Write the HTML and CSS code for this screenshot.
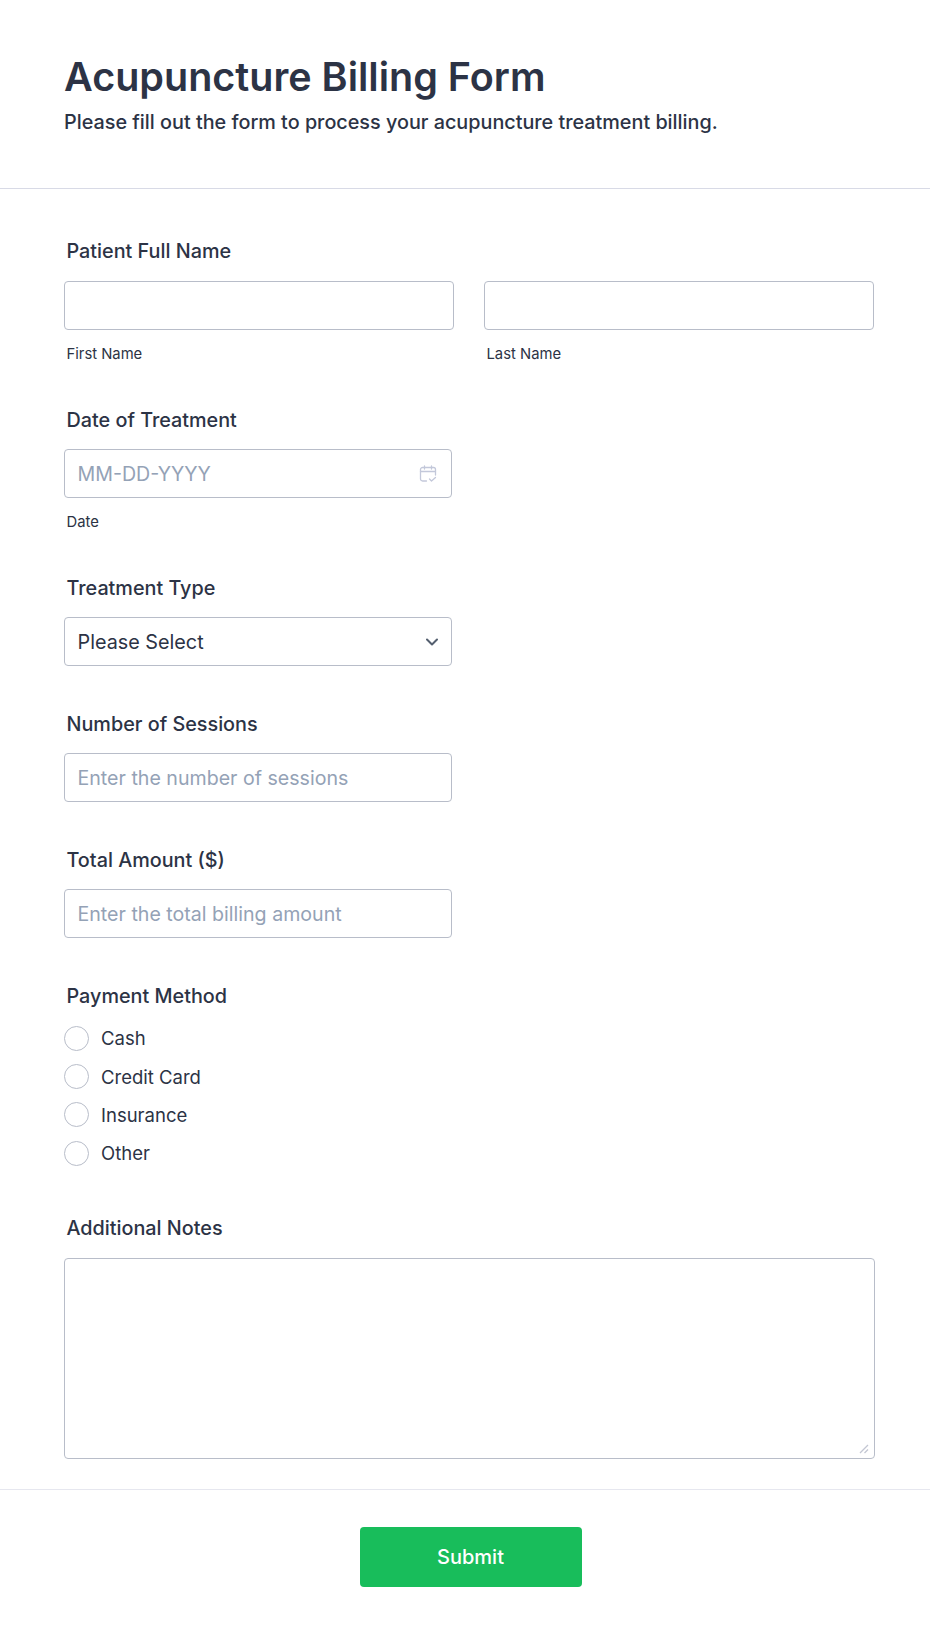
FILE: index.html
```html
<!DOCTYPE html>
<html>
<head>
<meta charset="utf-8">
<title>Acupuncture Billing Form</title>
<link rel="stylesheet" href="styles.css">
</head>
<body>
<form class="form">
	<!--header-->
	<div class="form-head">
		<h1>Acupuncture Billing Form</h1>
		<p>Please fill out the form to process your acupuncture treatment billing.</p>
	</div>
	<!--fields-->
	<div class="form-body">
		<div class="field field-name">
			<label class="label">Patient Full Name</label>
			<div class="name-row">
				<div>
					<input class="input" type="text">
					<span class="sublabel">First Name</span>
				</div>
				<div>
					<input class="input" type="text">
					<span class="sublabel">Last Name</span>
				</div>
			</div>
		</div>
		<div class="field field-date">
			<label class="label">Date of Treatment</label>
			<div class="short date-box">
				<input class="input" type="text" placeholder="MM-DD-YYYY">
				<svg class="cal" width="18" height="18" viewBox="0 0 18 18" fill="none" stroke="#c3c8da" stroke-width="1.3" stroke-linecap="round" stroke-linejoin="round">
					<path d="M7.5 16H3.5A2 2 0 0 1 1.5 14V4.5A2 2 0 0 1 3.5 2.500H14.500A2 2 0 0 1 16.500 4.500V10"/>
					<path d="M1.500 6.500H16.500M5.500 1V4M12.500 1V4"/>
					<path d="M10.500 14L12.500 16L16.500 12.500"/>
				</svg>
			</div>
			<span class="sublabel">Date</span>
		</div>
		<div class="field field-select">
			<label class="label">Treatment Type</label>
			<div class="short select-box">
				<span>Please Select</span>
				<svg width="12" height="8" viewBox="0 0 12 8" fill="none" stroke="#545f6f" stroke-width="2" stroke-linecap="round" stroke-linejoin="round">
					<path d="M1 1.500L6 6.500L11 1.500"/>
				</svg>
			</div>
		</div>
		<div class="field">
			<label class="label">Number of Sessions</label>
			<input class="input short" type="text" placeholder="Enter the number of sessions">
		</div>
		<div class="field">
			<label class="label">Total Amount ($)</label>
			<input class="input short" type="text" placeholder="Enter the total billing amount">
		</div>
		<div class="field field-pay">
			<label class="label">Payment Method</label>
			<ul class="radios">
				<li><i></i>Cash</li>
				<li><i></i>Credit Card</li>
				<li><i></i>Insurance</li>
				<li><i></i>Other</li>
			</ul>
		</div>
		<div class="field field-notes">
			<label class="label">Additional Notes</label>
			<div class="notes-box">
				<textarea class="input notes"></textarea>
				<svg class="grip" width="10" height="10" viewBox="0 0 10 10" fill="none" stroke="#c3c7d3" stroke-width="1.300">
					<path d="M1 9L9 1M5.500 9L9 5.500"/>
				</svg>
			</div>
		</div>
	</div>
	<!--submit-->
	<div class="form-foot">
		<button class="submit" type="button">Submit</button>
	</div>
</form>
</body>
</html>
```

FILE: styles.css
```css
*{box-sizing:border-box;}
html,body{margin:0;padding:0;background:#fff;}
body{font-family:Inter,"Liberation Sans",sans-serif;color:#2c3345;}
h1,p,ul,li{margin:0;padding:0;}
li{list-style:none;}
/*header*/
.form-head{height:189px;padding:52px 64px 0;border-bottom:1px solid #d8dae6;}
.form-head h1{font-size:39.500px;line-height:50px;font-weight:600;}
.form-head p{font-size:19.800px;line-height:24px;font-weight:450;margin-top:8px;}
/*fields*/
.form-body{padding:50px 55px 0 64px;}
.field{margin-bottom:46px;}
.label{display:block;font-size:19.800px;line-height:24px;font-weight:450;padding-left:2.500px;margin-bottom:17px;}
.field-name .label{margin-bottom:18px;}
.sublabel{display:block;font-size:14.800px;line-height:16px;padding-left:2.500px;margin-top:16px;}
.input{display:block;width:100%;height:49px;padding:0 12.500px;background:#fff;border:1px solid #b8bdc9;border-radius:4px;font:19.600px Inter,"Liberation Sans",sans-serif;color:#2c3345;outline:0;}
.input::placeholder{color:#94a2b6;opacity:1;}
.short{width:388px;}
.name-row{display:grid;grid-template-columns:390px 390px;column-gap:30px;}
.date-box{position:relative;}
.date-box .cal{position:absolute;right:15px;top:16px;}
.select-box{display:flex;align-items:center;justify-content:space-between;height:49px;padding:0 13px;border:1px solid #b8bdc9;border-radius:4px;font-size:19.800px;}
.select-box span{margin-left:-0.500px;}
/*radio*/
.field-pay{margin-bottom:43.400px;}
.field-pay .label{margin-bottom:11px;}
.radios li{display:flex;align-items:center;height:38.400px;font-size:18.500px;}
.radios i{width:25px;height:25px;margin-right:12px;border:1px solid #b8bdc9;border-radius:50%;}
/*notes*/
.field-notes{margin-bottom:0;}
.field-notes .label{margin-bottom:18px;}
.notes-box{position:relative;}
.notes{height:201px;padding:10px 13px;resize:none;}
.notes-box .grip{position:absolute;right:6px;bottom:5px;}
/*submit*/
.form-foot{margin-top:30px;padding-top:37px;border-top:1px solid #e6e7ef;display:flex;justify-content:center;}
.submit{width:222px;height:60px;margin-left:11px;border:0;border-radius:4px;background:#18bd5b;color:#fff;font:450 20px Inter,"Liberation Sans",sans-serif;}
```
